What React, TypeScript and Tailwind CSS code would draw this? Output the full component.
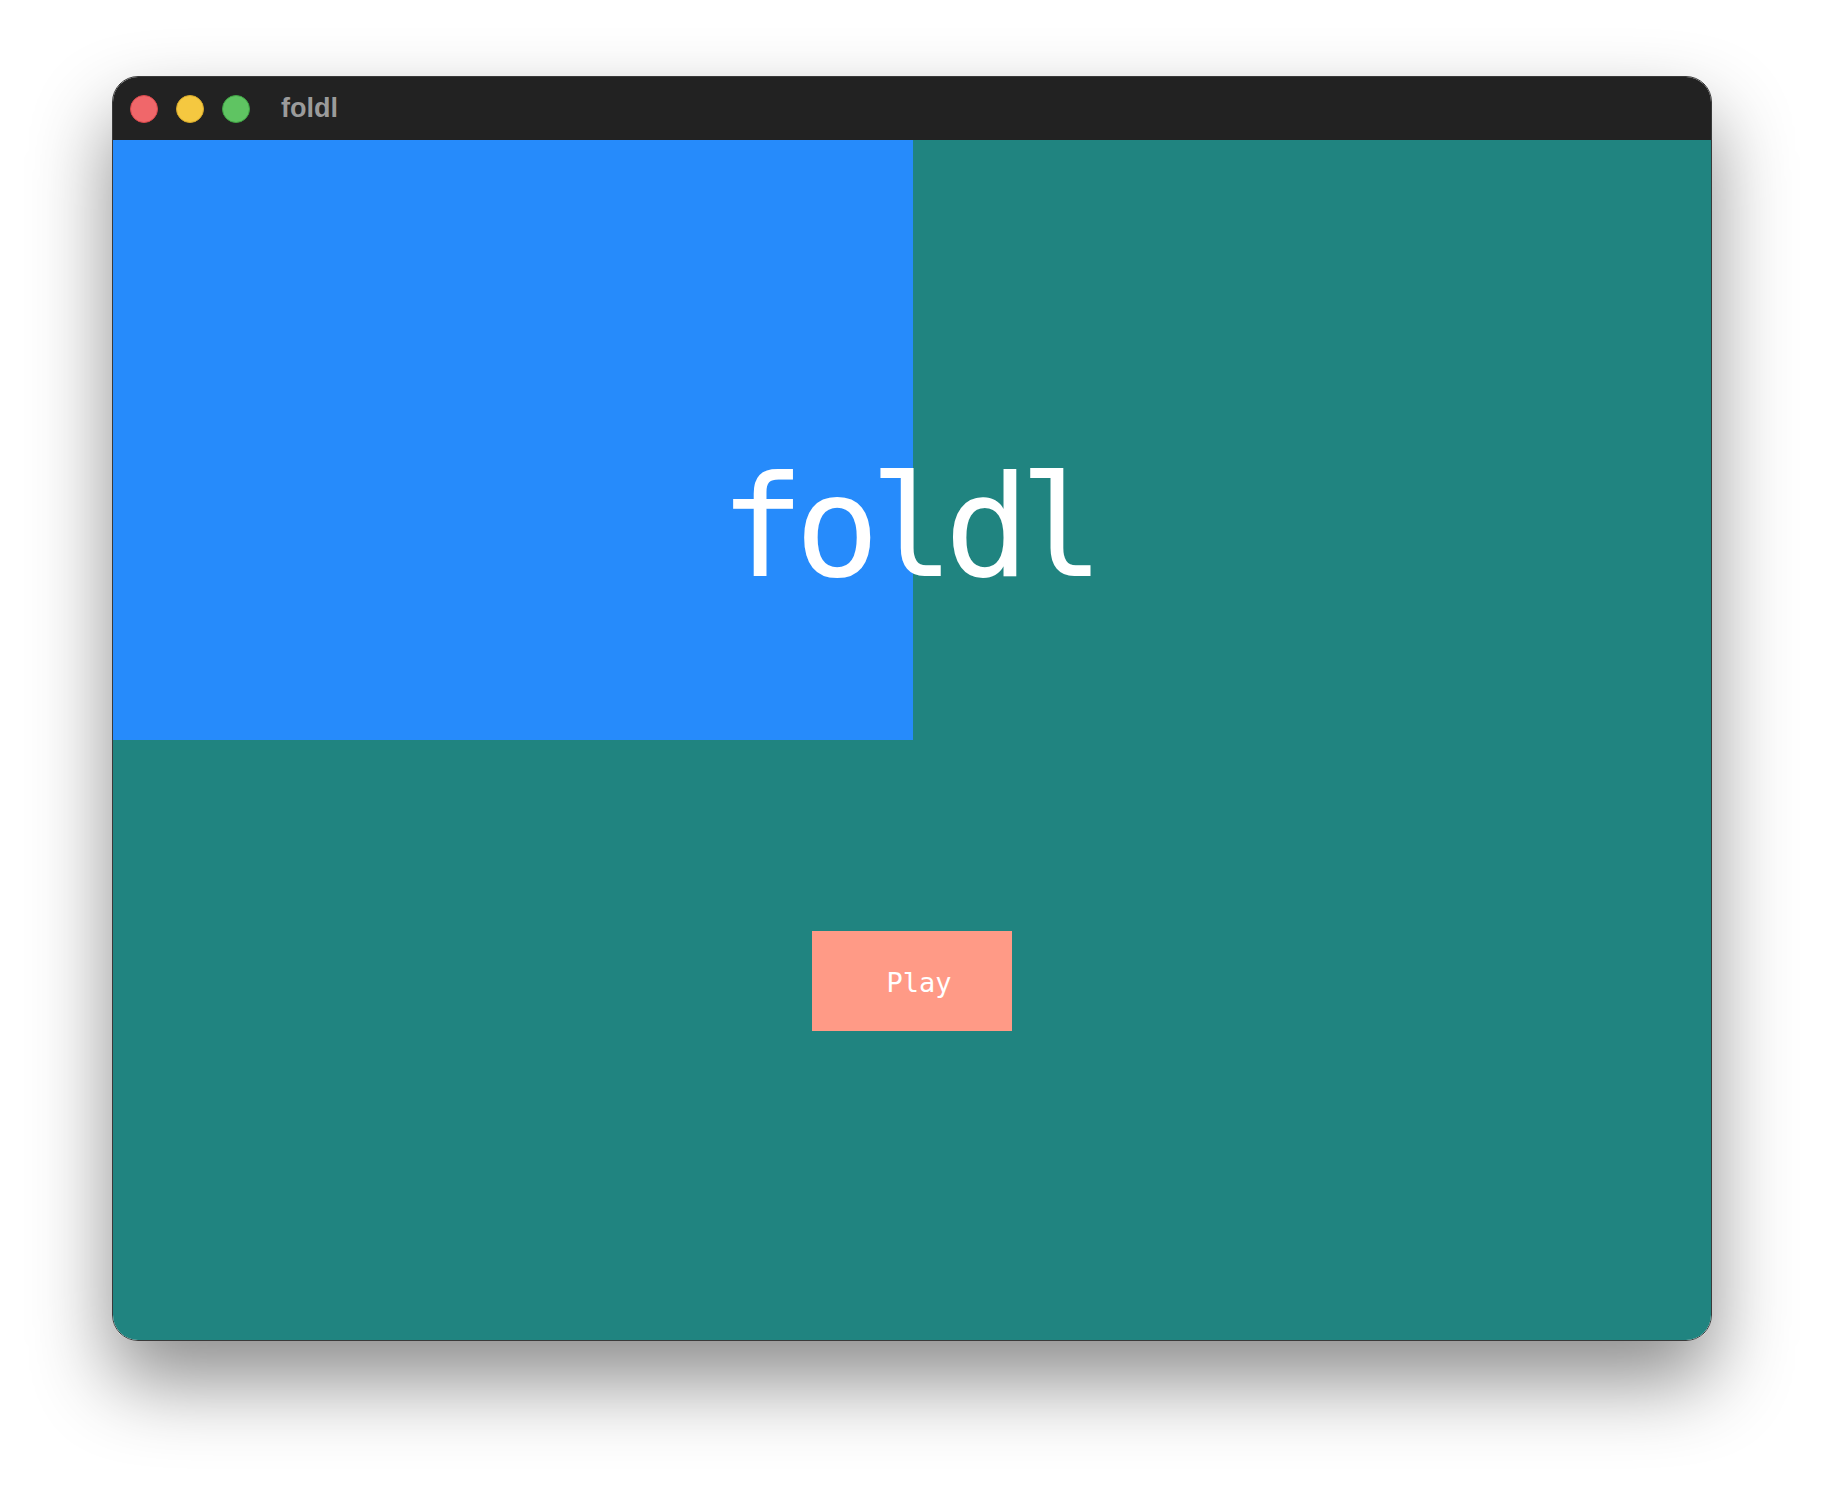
export default function App() {
  return (
    <div className="min-h-[1488px] w-full bg-white pt-[76px]">
      <div className="mx-auto w-[1600px] overflow-hidden rounded-[26px] border border-[#3a3a3a] shadow-[0_40px_80px_rgba(0,0,0,0.45)]">
        <div className="flex h-[63px] items-center bg-[#222222] pl-[17px]">
          <div className="flex items-center gap-[18px]">
            <span className="h-[28px] w-[28px] rounded-full border border-[#d9484c] bg-[#f0676a]" />
            <span className="h-[28px] w-[28px] rounded-full border border-[#d6a92b] bg-[#f5c840]" />
            <span className="h-[28px] w-[28px] rounded-full border border-[#3fa344] bg-[#5fc462]" />
          </div>
          <span
            className="ml-[31px] text-[27px] font-bold text-[#9b9b9b]"
            style={{ fontFamily: '"Liberation Sans", Arial, sans-serif' }}
          >
            foldl
          </span>
        </div>
        <div className="grid h-[1200px] bg-[#208480]">
          <div className="col-start-1 row-start-1 h-[600px] w-[800px] bg-[#268bfb]" />
          <div
            className="col-start-1 row-start-1 flex flex-col items-center pt-[317px] text-white"
            style={{ fontFamily: '"DejaVu Sans Mono", monospace' }}
          >
            <div className="pr-[10px] text-[141px] leading-[141px] tracking-[-10px]">foldl</div>
            <button className="mt-[333px] flex h-[100px] w-[200px] items-center justify-center bg-[#ff9a86] pl-[14px] pt-[4px] text-[27px] text-white">
              Play
            </button>
          </div>
        </div>
      </div>
    </div>
  );
}
